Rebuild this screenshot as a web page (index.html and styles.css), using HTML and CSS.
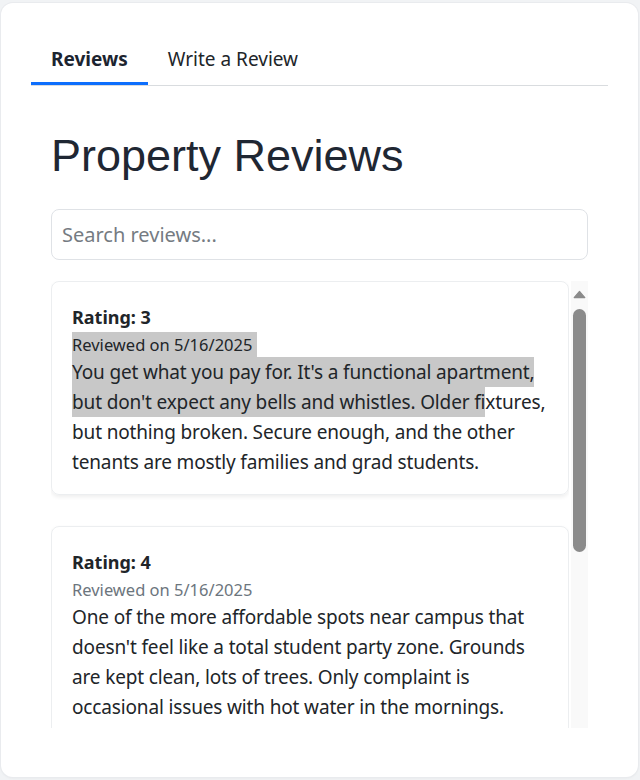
FILE: index.html
```html
<!DOCTYPE html>
<html lang="en">
<head>
<meta charset="utf-8">
<title>Property Reviews</title>
<link rel="stylesheet" href="styles.css">
</head>
<body>
<div class="panel">
  <nav class="tabs">
    <a class="tab active">Reviews</a>
    <a class="tab">Write a Review</a>
  </nav>
  <main class="content">
    <h1 class="title">Property Reviews</h1>
    <input class="search" type="text" placeholder="Search reviews...">
    <div class="list-wrap">
      <div class="list">
        <article class="card">
          <div class="rating">Rating: 3</div>
          <div class="date"><span class="sel sel-date">Reviewed on 5/16/2025</span></div>
          <p class="text"><span class="sel">You get what you pay for. It's a functional apartment, but don't expect any bells and whistles. Older fi</span>xtures, but nothing broken. Secure enough, and the other tenants are mostly families and grad students.</p>
        </article>
        <article class="card">
          <div class="rating">Rating: 4</div>
          <div class="date">Reviewed on 5/16/2025</div>
          <p class="text">One of the more affordable spots near campus that doesn't feel like a total student party zone. Grounds are kept clean, lots of trees. Only complaint is occasional issues with hot water in the mornings.</p>
        </article>
      </div>
      <div class="scrollbar" aria-hidden="true">
        <svg class="scroll-arrow" width="17" height="10" viewBox="0 0 17 10">
          <path d="M3.2 8.6 L8.5 2.4 L13.8 8.6 Z" fill="#8a8a8a" stroke="#8a8a8a" stroke-width="1.2" stroke-linejoin="round"/>
        </svg>
        <div class="scroll-thumb"></div>
      </div>
    </div>
  </main>
</div>
</body>
</html>
```

FILE: styles.css
```css
html, body {
  margin: 0;
  padding: 0;
}
body {
  background: #f1f3f5;
  font-family: "Noto Sans", "Open Sans", sans-serif;
  color: #212529;
}
.panel {
  box-sizing: border-box;
  margin: 3px 2px 3px 1px;
  height: 774px;
  background: #ffffff;
  border-radius: 12px;
  box-shadow: 0 0 0 1px #e9ebee, 0 1px 3px rgba(0, 0, 0, 0.06);
  padding: 29px 30px 0 30px;
  overflow: hidden;
}
.tabs {
  display: flex;
  border-bottom: 1px solid #d9dcdf;
}
.tab {
  display: block;
  padding: 13px 20px 9px;
  font-size: 19px;
  line-height: 28px;
  color: #212529;
  border-bottom: 3px solid transparent;
}
.tab.active {
  font-weight: 700;
  color: #1c2430;
  border-bottom-color: #0d6efd;
}
.content {
  padding: 0 20px;
}
.title {
  margin: 43px 0 26px;
  font-family: "Liberation Sans", Arial, sans-serif;
  font-weight: 400;
  font-size: 45px;
  line-height: 54px;
  color: #1f2733;
}
.search {
  display: block;
  box-sizing: border-box;
  width: 100%;
  height: 51px;
  margin: 0;
  padding: 11px 10px;
  border: 1px solid #dfe2e6;
  border-radius: 8px;
  font-family: "Noto Sans", "Open Sans", sans-serif;
  font-size: 20px;
  line-height: 27px;
  color: #212529;
  outline: none;
}
.search::placeholder {
  color: #757b82;
}
.list-wrap {
  display: flex;
  gap: 2px;
  margin-top: 21px;
  height: 447px;
  overflow: hidden;
}
.list {
  flex: 1;
  min-width: 0;
  overflow: hidden;
}
.scrollbar {
  flex: 0 0 17px;
  display: flex;
  flex-direction: column;
  align-items: center;
  background: #f9f9f9;
}
.scroll-arrow {
  display: block;
  margin-top: 8px;
}
.scroll-thumb {
  margin-top: 10px;
  width: 13px;
  height: 243px;
  border-radius: 7px;
  background: #8b8b8b;
}
.card {
  margin: 0 0 31px 0;
  padding: 22px 20px 17px;
  border: 1px solid #eceef0;
  border-radius: 8px;
  box-shadow: 0 2px 4px rgba(0, 0, 0, 0.07);
}
.rating {
  font-size: 18px;
  line-height: 27px;
  font-weight: 700;
}
.date {
  margin-top: 2px;
  font-size: 16.5px;
  line-height: 24px;
  color: #6c757d;
}
.text {
  margin: 0;
  font-size: 19px;
  line-height: 30px;
  letter-spacing: -0.15px;
}
.sel {
  background: #c8c8c8;
  color: #212529;
  padding: 2px 0;
}
.sel-date {
  padding: 1px 5px 1px 0;
}
```
